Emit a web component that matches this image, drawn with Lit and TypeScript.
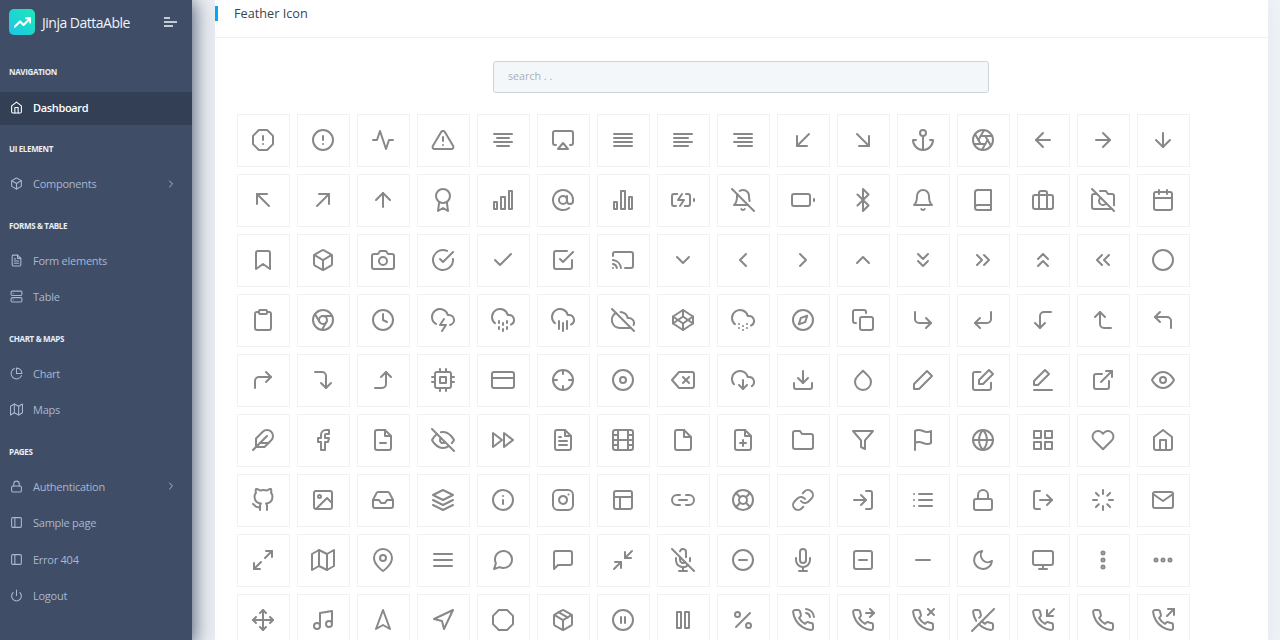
import { LitElement, html, css } from "lit";
import { customElement } from "lit/decorators.js";
import { unsafeSVG } from "lit/directives/unsafe-svg.js";

// Shape shorthand: c=circle, l=line, o=polyline, g=polygon, r=rect, anything else = path data.
const shape = (s: string) => {
  const k = s[0];
  const a = s.slice(1).trim().split(" ");
  if (k === "c") return `<circle cx="${a[0]}" cy="${a[1]}" r="${a[2]}"/>`;
  if (k === "l") return `<line x1="${a[0]}" y1="${a[1]}" x2="${a[2]}" y2="${a[3]}"/>`;
  if (k === "o") return `<polyline points="${a.join(" ")}"/>`;
  if (k === "g") return `<polygon points="${a.join(" ")}"/>`;
  if (k === "r") return `<rect x="${a[0]}" y="${a[1]}" width="${a[2]}" height="${a[3]}" rx="${a[4] || 0}"/>`;
  return `<path d="${s}"/>`;
};
const icon = (d: string) =>
  unsafeSVG(
    `<svg viewBox="0 0 24 24" fill="none" stroke="currentColor" stroke-width="2" stroke-linecap="round" stroke-linejoin="round">${d
      .split("|")
      .map(shape)
      .join("")}</svg>`
  );

const OCT = "g7.86 2 16.14 2 22 7.86 22 16.14 16.14 22 7.86 22 2 16.14 2 7.86 7.86 2";
const C = "c12 12 10";
const BOX =
  "M21 16V8a2 2 0 0 0-1-1.73l-7-4a2 2 0 0 0-2 0l-7 4A2 2 0 0 0 3 8v8a2 2 0 0 0 1 1.73l7 4a2 2 0 0 0 2 0l7-4A2 2 0 0 0 21 16z|o3.27 6.96 12 12.01 20.73 6.96|l12 22.08 12 12";
const PH =
  "M22 16.92v3a2 2 0 0 1-2.18 2 19.79 19.79 0 0 1-8.63-3.07 19.5 19.5 0 0 1-6-6 19.79 19.79 0 0 1-3.07-8.67A2 2 0 0 1 4.11 2h3a2 2 0 0 1 2 1.72 12.84 12.84 0 0 0 .7 2.81 2 2 0 0 1-.45 2.11L8.09 9.91a16 16 0 0 0 6 6l1.27-1.27a2 2 0 0 1 2.11-.45 12.84 12.84 0 0 0 2.81.7A2 2 0 0 1 22 16.92z";
const FILE2 = "M14 2H6a2 2 0 0 0-2 2v16a2 2 0 0 0 2 2h12a2 2 0 0 0 2-2V8z|o14 2 14 8 20 8";
const CLOUD = "M20 16.58A5 5 0 0 0 18 7h-1.26A8 8 0 1 0 4 15.25";

const ICONS: string[] = [
  // row 1
  `${OCT}|l12 8 12 12|l12 16 12.01 16`,
  `${C}|l12 8 12 12|l12 16 12.01 16`,
  "o22 12 18 12 15 21 9 3 6 12 2 12",
  "M10.29 3.86L1.82 18a2 2 0 0 0 1.71 3h16.94a2 2 0 0 0 1.71-3L13.71 3.86a2 2 0 0 0-3.42 0z|l12 9 12 13|l12 17 12.01 17",
  "l18 10 6 10|l21 6 3 6|l21 14 3 14|l18 18 6 18",
  "M5 17H4a2 2 0 0 1-2-2V5a2 2 0 0 1 2-2h16a2 2 0 0 1 2 2v10a2 2 0 0 1-2 2h-1|g12 15 17 21 7 21 12 15",
  "l21 10 3 10|l21 6 3 6|l21 14 3 14|l21 18 3 18",
  "l17 10 3 10|l21 6 3 6|l21 14 3 14|l17 18 3 18",
  "l21 10 7 10|l21 6 3 6|l21 14 3 14|l21 18 7 18",
  "l18 6 6 18|o16 18 6 18 6 8",
  "l6 6 18 18|o18 8 18 18 8 18",
  "c12 5 3|l12 22 12 8|M5 12H2a10 10 0 0 0 20 0h-3",
  `${C}|l14.31 8 20.05 17.94|l9.69 8 21.17 8|l7.38 12 13.12 2.06|l9.69 16 3.95 6.06|l14.31 16 2.83 16|l16.62 12 10.88 21.94`,
  "l19 12 5 12|o12 19 5 12 12 5",
  "l5 12 19 12|o12 5 19 12 12 19",
  "l12 5 12 19|o19 12 12 19 5 12",
  // row 2
  "l18 18 6 6|o6 16 6 6 16 6",
  "l6 18 18 6|o8 6 18 6 18 16",
  "l12 19 12 5|o5 12 12 5 19 12",
  "c12 8 7|o8.21 13.89 7 23 12 20 17 23 15.79 13.88",
  "r3 14 3 7|r10 9 4 12|r18 3 3 18",
  "c12 12 4|M16 8v5a3 3 0 0 0 6 0v-1a10 10 0 1 0-3.92 7.94",
  "r3 14 3 7|r10 3 4 18|r18 9 3 12",
  "M5 18H3a2 2 0 0 1-2-2V8a2 2 0 0 1 2-2h3.19M15 6h2a2 2 0 0 1 2 2v8a2 2 0 0 1-2 2h-3.19|l23 13 23 11|o11 6 7 12 13 12 9 18",
  "M13.73 21a2 2 0 0 1-3.46 0|M18.63 13A17.89 17.89 0 0 1 18 8|M6.26 6.26A5.86 5.86 0 0 0 6 8c0 7-3 9-3 9h14|M18 8a6 6 0 0 0-9.33-5|l1 1 23 23",
  "r1 6 18 12 2|l23 13 23 11",
  "o6.5 6.5 17.5 17.5 12 23 12 1 17.5 6.5 6.5 17.5",
  "M18 8A6 6 0 0 0 6 8c0 7-3 9-3 9h18s-3-2-3-9|M13.73 21a2 2 0 0 1-3.46 0",
  "M4 19.5A2.5 2.5 0 0 1 6.5 17H20|M6.5 2H20v20H6.5A2.5 2.5 0 0 1 4 19.5v-15A2.5 2.5 0 0 1 6.5 2z",
  "r2 7 20 14 2|M16 21V5a2 2 0 0 0-2-2h-4a2 2 0 0 0-2 2v16",
  "l1 1 23 23|M21 21H3a2 2 0 0 1-2-2V8a2 2 0 0 1 2-2h3m3-3h6l2 3h4a2 2 0 0 1 2 2v9.34m-7.72-2.06a4 4 0 1 1-5.56-5.56",
  "r3 4 18 18 2|l16 2 16 6|l8 2 8 6|l3 10 21 10",
  // row 3
  "M19 21l-7-5-7 5V5a2 2 0 0 1 2-2h10a2 2 0 0 1 2 2z",
  BOX,
  "M23 19a2 2 0 0 1-2 2H3a2 2 0 0 1-2-2V8a2 2 0 0 1 2-2h4l2-3h6l2 3h4a2 2 0 0 1 2 2z|c12 13 4",
  "M22 11.08V12a10 10 0 1 1-5.93-9.14|o22 4 12 14.01 9 11.01",
  "o20 6 9 17 4 12",
  "o9 11 12 14 22 4|M21 12v7a2 2 0 0 1-2 2H5a2 2 0 0 1-2-2V5a2 2 0 0 1 2-2h11",
  "M2 16.1A5 5 0 0 1 5.9 20M2 12.05A9 9 0 0 1 9.95 20M2 8V6a2 2 0 0 1 2-2h16a2 2 0 0 1 2 2v12a2 2 0 0 1-2 2h-6|l2 20 2.01 20",
  "o6 9 12 15 18 9",
  "o15 18 9 12 15 6",
  "o9 18 15 12 9 6",
  "o18 15 12 9 6 15",
  "o7 13 12 18 17 13|o7 6 12 11 17 6",
  "o13 17 18 12 13 7|o6 17 11 12 6 7",
  "o17 11 12 6 7 11|o17 18 12 13 7 18",
  "o11 17 6 12 11 7|o18 17 13 12 18 7",
  C,
  // row 4
  "M16 4h2a2 2 0 0 1 2 2v14a2 2 0 0 1-2 2H6a2 2 0 0 1-2-2V6a2 2 0 0 1 2-2h2|r8 2 8 4 1",
  `${C}|c12 12 4|l21.17 8 12 8|l3.95 6.06 8.54 14|l10.88 21.94 15.46 14`,
  `${C}|o12 6 12 12 16 14`,
  "M19 16.9A5 5 0 0 0 18 7h-1.26a8 8 0 1 0-11.62 9|o13 11 9 17 15 17 11 23",
  `l8 19 8 21|l8 13 8 15|l16 19 16 21|l16 13 16 15|l12 21 12 23|l12 15 12 17|${CLOUD}`,
  `l16 13 16 21|l8 13 8 21|l12 15 12 23|${CLOUD}`,
  "M22.61 16.95A5 5 0 0 0 18 10h-1.26a8 8 0 0 0-7.05-6M5 5a8 8 0 0 0 4 15h9a5 5 0 0 0 1.7-.3|l1 1 23 23",
  "g12 2 22 8.5 22 15.5 12 22 2 15.5 2 8.5 12 2|l12 22 12 15.5|o22 8.5 12 15.5 2 8.5|o2 15.5 12 8.5 22 15.5|l12 2 12 8.5",
  "M20 17.58A5 5 0 0 0 18 8h-1.26A8 8 0 1 0 4 16.25|l8 16 8.01 16|l8 20 8.01 20|l12 18 12.01 18|l12 22 12.01 22|l16 16 16.01 16|l16 20 16.01 20",
  `${C}|g16.24 7.76 14.12 14.12 7.76 16.24 9.88 9.88 16.24 7.76`,
  "r9 9 13 13 2|M5 15H4a2 2 0 0 1-2-2V4a2 2 0 0 1 2-2h9a2 2 0 0 1 2 2v1",
  "o15 10 20 15 15 20|M4 4v7a4 4 0 0 0 4 4h12",
  "o9 10 4 15 9 20|M20 4v7a4 4 0 0 1-4 4H4",
  "o14 15 9 20 4 15|M20 4h-7a4 4 0 0 0-4 4v12",
  "o14 9 9 4 4 9|M20 20h-7a4 4 0 0 1-4-4V4",
  "o9 14 4 9 9 4|M20 20v-7a4 4 0 0 0-4-4H4",
  // row 5
  "o15 14 20 9 15 4|M4 20v-7a4 4 0 0 1 4-4h12",
  "o10 15 15 20 20 15|M4 4h7a4 4 0 0 1 4 4v12",
  "o10 9 15 4 20 9|M4 20h7a4 4 0 0 0 4-4V4",
  "r4 4 16 16 2|r9 9 6 6|l9 1 9 4|l15 1 15 4|l9 20 9 23|l15 20 15 23|l20 9 23 9|l20 14 23 14|l1 9 4 9|l1 14 4 14",
  "r1 4 22 16 2|l1 10 23 10",
  `${C}|l22 12 18 12|l6 12 2 12|l12 6 12 2|l12 22 12 18`,
  `${C}|c12 12 3`,
  "M21 4H8l-7 8 7 8h13a2 2 0 0 0 2-2V6a2 2 0 0 0-2-2z|l18 9 12 15|l12 9 18 15",
  "o8 17 12 21 16 17|l12 12 12 21|M20.88 18.09A5 5 0 0 0 18 9h-1.26A8 8 0 1 0 3 16.29",
  "M21 15v4a2 2 0 0 1-2 2H5a2 2 0 0 1-2-2v-4|o7 10 12 15 17 10|l12 15 12 3",
  "M12 2.69l5.66 5.66a8 8 0 1 1-11.31 0z",
  "g16 3 21 8 8 21 3 21 3 16 16 3",
  "M20 14.66V20a2 2 0 0 1-2 2H4a2 2 0 0 1-2-2V6a2 2 0 0 1 2-2h5.34|g18 2 22 6 12 16 8 16 8 12 18 2",
  "g14 2 18 6 7 17 3 17 3 13 14 2|l3 22 21 22",
  "M18 13v6a2 2 0 0 1-2 2H5a2 2 0 0 1-2-2V8a2 2 0 0 1 2-2h6|o15 3 21 3 21 9|l10 14 21 3",
  "M1 12s4-8 11-8 11 8 11 8-4 8-11 8-11-8-11-8z|c12 12 3",
  // row 6
  "M20.24 12.24a6 6 0 0 0-8.49-8.49L5 10.5V19h8.5z|l16 8 2 22|l17.5 15 9 15",
  "M18 2h-3a5 5 0 0 0-5 5v3H7v4h3v8h4v-8h3l1-4h-4V7a1 1 0 0 1 1-1h3z",
  `${FILE2}|l9 15 15 15`,
  "M17.94 17.94A10.07 10.07 0 0 1 12 20c-7 0-11-8-11-8a18.45 18.45 0 0 1 5.06-5.94M9.9 4.24A9.12 9.12 0 0 1 12 4c7 0 11 8 11 8a18.5 18.5 0 0 1-2.16 3.19m-6.72-1.07a3 3 0 1 1-4.24-4.24|l1 1 23 23",
  "g13 19 22 12 13 5 13 19|g2 19 11 12 2 5 2 19",
  `${FILE2}|l16 13 8 13|l16 17 8 17|o10 9 9 9 8 9`,
  "r2 2 20 20 2.18|l7 2 7 22|l17 2 17 22|l2 12 22 12|l2 7 7 7|l2 17 7 17|l17 17 22 17|l17 7 22 7",
  "M13 2H6a2 2 0 0 0-2 2v16a2 2 0 0 0 2 2h12a2 2 0 0 0 2-2V9z|o13 2 13 9 20 9",
  `${FILE2}|l12 18 12 12|l9 15 15 15`,
  "M22 19a2 2 0 0 1-2 2H4a2 2 0 0 1-2-2V5a2 2 0 0 1 2-2h5l2 3h9a2 2 0 0 1 2 2z",
  "g22 3 2 3 10 12.46 10 19 14 21 14 12.46 22 3",
  "M4 15s1-1 4-1 5 2 8 2 4-1 4-1V3s-1 1-4 1-5-2-8-2-4 1-4 1z|l4 22 4 15",
  `${C}|l2 12 22 12|M12 2a15.3 15.3 0 0 1 4 10 15.3 15.3 0 0 1-4 10 15.3 15.3 0 0 1-4-10 15.3 15.3 0 0 1 4-10z`,
  "r3 3 7 7|r14 3 7 7|r14 14 7 7|r3 14 7 7",
  "M20.84 4.61a5.5 5.5 0 0 0-7.78 0L12 5.67l-1.06-1.06a5.5 5.5 0 0 0-7.78 7.78l1.06 1.06L12 21.23l7.78-7.78 1.06-1.06a5.5 5.5 0 0 0 0-7.78z",
  "M3 9l9-7 9 7v11a2 2 0 0 1-2 2H5a2 2 0 0 1-2-2z|o9 22 9 12 15 12 15 22",
  // row 7
  "M9 19c-5 1.5-5-2.5-7-3m14 6v-3.87a3.37 3.37 0 0 0-.94-2.61c3.14-.35 6.44-1.54 6.44-7A5.44 5.44 0 0 0 20 4.77 5.07 5.07 0 0 0 19.91 1S18.73.65 16 2.48a13.38 13.38 0 0 0-7 0C6.27.65 5.09 1 5.09 1A5.07 5.07 0 0 0 5 4.77a5.44 5.44 0 0 0-1.5 3.78c0 5.42 3.3 6.61 6.44 7A3.37 3.37 0 0 0 9 18.13V22",
  "r3 3 18 18 2|c8.5 8.5 1.5|o21 15 16 10 5 21",
  "o22 12 16 12 14 15 10 15 8 12 2 12|M5.45 5.11L2 12v6a2 2 0 0 0 2 2h16a2 2 0 0 0 2-2v-6l-3.45-6.89A2 2 0 0 0 16.76 4H7.24a2 2 0 0 0-1.79 1.11z",
  "g12 2 2 7 12 12 22 7 12 2|o2 17 12 22 22 17|o2 12 12 17 22 12",
  `${C}|l12 16 12 12|l12 8 12.01 8`,
  "r2 2 20 20 5|M16 11.37A4 4 0 1 1 12.63 8 4 4 0 0 1 16 11.37z|l17.5 6.5 17.51 6.5",
  "r3 3 18 18 2|l3 9 21 9|l9 21 9 9",
  "M15 7h3a5 5 0 0 1 5 5 5 5 0 0 1-5 5h-3m-6 0H6a5 5 0 0 1-5-5 5 5 0 0 1 5-5h3|l8 12 16 12",
  `${C}|c12 12 4|l4.93 4.93 9.17 9.17|l14.83 14.83 19.07 19.07|l14.83 9.17 19.07 4.93|l4.93 19.07 9.17 14.83`,
  "M10 13a5 5 0 0 0 7.54.54l3-3a5 5 0 0 0-7.07-7.07l-1.72 1.71|M14 11a5 5 0 0 0-7.54-.54l-3 3a5 5 0 0 0 7.07 7.07l1.71-1.71",
  "M15 3h4a2 2 0 0 1 2 2v14a2 2 0 0 1-2 2h-4|o10 17 15 12 10 7|l15 12 3 12",
  "l8 6 21 6|l8 12 21 12|l8 18 21 18|l3 6 3.01 6|l3 12 3.01 12|l3 18 3.01 18",
  "r3 11 18 11 2|M7 11V7a5 5 0 0 1 10 0v4",
  "M9 21H5a2 2 0 0 1-2-2V5a2 2 0 0 1 2-2h4|o16 17 21 12 16 7|l21 12 9 12",
  "l12 2 12 6|l12 18 12 22|l4.93 4.93 7.76 7.76|l16.24 16.24 19.07 19.07|l2 12 6 12|l18 12 22 12|l4.93 19.07 7.76 16.24|l16.24 7.76 19.07 4.93",
  "M4 4h16c1.1 0 2 .9 2 2v12c0 1.1-.9 2-2 2H4c-1.1 0-2-.9-2-2V6c0-1.1.9-2 2-2z|o22 6 12 13 2 6",
  // row 8
  "o15 3 21 3 21 9|o9 21 3 21 3 15|l21 3 14 10|l3 21 10 14",
  "g1 6 1 22 8 18 16 22 23 18 23 2 16 6 8 2 1 6|l8 2 8 18|l16 6 16 22",
  "M21 10c0 7-9 13-9 13s-9-6-9-13a9 9 0 0 1 18 0z|c12 10 3",
  "l3 12 21 12|l3 6 21 6|l3 18 21 18",
  "M21 11.5a8.38 8.38 0 0 1-.9 3.8 8.5 8.5 0 0 1-7.6 4.7 8.38 8.38 0 0 1-3.8-.9L3 21l1.9-5.7a8.38 8.38 0 0 1-.9-3.8 8.5 8.5 0 0 1 4.7-7.6 8.38 8.38 0 0 1 3.8-.9h.5a8.48 8.48 0 0 1 8 8v.5z",
  "M21 15a2 2 0 0 1-2 2H7l-4 4V5a2 2 0 0 1 2-2h14a2 2 0 0 1 2 2z",
  "o4 14 10 14 10 20|o20 10 14 10 14 4|l14 10 21 3|l3 21 10 14",
  "l1 1 23 23|M9 9v3a3 3 0 0 0 5.12 2.12M15 9.34V4a3 3 0 0 0-5.94-.6|M17 16.95A7 7 0 0 1 5 12v-2m14 0v2a7 7 0 0 1-.11 1.23|l12 19 12 23|l8 23 16 23",
  `${C}|l8 12 16 12`,
  "M12 1a3 3 0 0 0-3 3v8a3 3 0 0 0 6 0V4a3 3 0 0 0-3-3z|M19 10v2a7 7 0 0 1-14 0v-2|l12 19 12 23|l8 23 16 23",
  "r3 3 18 18 2|l8 12 16 12",
  "l5 12 19 12",
  "M21 12.79A9 9 0 1 1 11.21 3 7 7 0 0 0 21 12.79z",
  "r2 3 20 14 2|l8 21 16 21|l12 17 12 21",
  "c12 12 1.5|c12 5 1.5|c12 19 1.5",
  "c12 12 1.5|c19 12 1.5|c5 12 1.5",
  // row 9
  "o5 9 2 12 5 15|o9 5 12 2 15 5|o15 19 12 22 9 19|o19 9 22 12 19 15|l2 12 22 12|l12 2 12 22",
  "M9 18V5l12-2v13|c6 18 3|c18 16 3",
  "g12 2 19 21 12 17 5 21 12 2",
  "g3 11 22 2 13 21 11 13 3 11",
  OCT,
  `l16.5 9.4 7.5 4.21|${BOX}`,
  `${C}|l10 15 10 9|l14 15 14 9`,
  "r6 4 4 16|r14 4 4 16",
  "l19 5 5 19|c6.5 6.5 2.5|c17.5 17.5 2.5",
  `M15.05 5A5 5 0 0 1 19 8.95M15.05 1A9 9 0 0 1 23 8.94|${PH}`,
  `o19 1 23 5 19 9|l15 5 23 5|${PH}`,
  `l23 1 17 7|l17 1 23 7|${PH}`,
  "M10.68 13.31a16 16 0 0 0 3.41 2.6l1.27-1.27a2 2 0 0 1 2.11-.45 12.84 12.84 0 0 0 2.81.7 2 2 0 0 1 1.72 2v3a2 2 0 0 1-2.18 2 19.79 19.79 0 0 1-8.63-3.07 19.42 19.42 0 0 1-3.33-2.67m-2.67-3.34a19.79 19.79 0 0 1-3.07-8.63A2 2 0 0 1 4.11 2h3a2 2 0 0 1 2 1.72 12.84 12.84 0 0 0 .7 2.81 2 2 0 0 1-.45 2.11L8.09 9.91|l23 1 1 23",
  `o16 2 16 8 22 8|l23 1 16 8|${PH}`,
  PH,
  `o23 7 23 1 17 1|l16 8 23 1|${PH}`,
];

const HOME = "M3 9l9-7 9 7v11a2 2 0 0 1-2 2H5a2 2 0 0 1-2-2z|o9 22 9 12 15 12 15 22";
const NAV: { label: string; items: { t: string; i: string; more?: boolean; on?: boolean }[] }[] = [
  { label: "NAVIGATION", items: [{ t: "Dashboard", i: HOME, on: true }] },
  { label: "UI ELEMENT", items: [{ t: "Components", i: BOX, more: true }] },
  {
    label: "FORMS & TABLE",
    items: [
      { t: "Form elements", i: `${FILE2}|l16 13 8 13|l16 17 8 17|o10 9 9 9 8 9` },
      { t: "Table", i: "r2 2 20 8 2|r2 14 20 8 2|l6 6 6.01 6|l6 18 6.01 18" },
    ],
  },
  {
    label: "CHART & MAPS",
    items: [
      { t: "Chart", i: "M21.21 15.89A10 10 0 1 1 8 2.83|M22 12A10 10 0 0 0 12 2v10z" },
      { t: "Maps", i: "g1 6 1 22 8 18 16 22 23 18 23 2 16 6 8 2 1 6|l8 2 8 18|l16 6 16 22" },
    ],
  },
  {
    label: "PAGES",
    items: [
      { t: "Authentication", i: "r3 11 18 11 2|M7 11V7a5 5 0 0 1 10 0v4", more: true },
      { t: "Sample page", i: "r3 3 18 18 2|l9 3 9 21" },
      { t: "Error 404", i: "r3 3 18 18 2|l9 3 9 21" },
      { t: "Logout", i: "M18.36 6.64a9 9 0 1 1-12.73 0|l12 2 12 12" },
    ],
  },
];

@customElement("app-root")
export class AppRoot extends LitElement {
  static styles = css`
    :host {
      display: grid;
      grid-template-columns: 192px 1fr;
      height: 640px;
      overflow: hidden;
      background: #f0f3f7;
      font-family: "Open Sans", "Liberation Sans", sans-serif;
    }
    svg {
      display: block;
      width: 100%;
      height: 100%;
    }
    .side {
      background: #3f4d67;
      color: #a9b7d0;
      box-shadow: 1px 0 20px 0 #3f4d67;
      position: relative;
      z-index: 1;
      padding-top: 9px;
    }
    .brand {
      display: flex;
      align-items: center;
      height: 26px;
      padding: 0 15px 0 9px;
    }
    .logo {
      width: 26px;
      height: 26px;
      border-radius: 5px;
      background: linear-gradient(-135deg, #1de9b6 0%, #1dc4e9 100%);
      color: #fff;
      padding: 4.5px;
      box-sizing: border-box;
    }
    .logo svg {
      stroke-width: 3;
    }
    .name {
      margin-left: 7px;
      flex: 1;
      color: #f0f3f8;
      font-size: 14px;
      letter-spacing: -0.5px;
    }
    .toggle {
      display: flex;
      flex-direction: column;
      gap: 2px;
      width: 13px;
    }
    .toggle i {
      display: block;
      height: 2px;
      background: #c3cbd8;
    }
    .toggle i:nth-child(1) {
      width: 6px;
    }
    .toggle i:nth-child(3) {
      width: 9px;
    }
    .group {
      display: flex;
      flex-direction: column;
    }
    .label {
      font-size: 8px;
      font-weight: 700;
      letter-spacing: -0.35px;
      color: #e8edf7;
      padding-left: 9px;
      height: 12px;
      line-height: 12px;
    }
    .row {
      display: flex;
      align-items: center;
      height: 33px;
      padding: 0 15px 3px 10px;
      box-sizing: border-box;
      margin-bottom: 3.5px;
      font-size: 11px;
      letter-spacing: -0.25px;
    }
    .row.on {
      background: #333f54;
      color: #fff;
      font-weight: 600;
      letter-spacing: -0.35px;
    }
    .ri {
      width: 13px;
      height: 13px;
      margin-right: 10px;
      flex: none;
    }
    .rt {
      flex: 1;
    }
    .chev {
      width: 12px;
      height: 12px;
    }
    .g0 {
      margin-top: 31px;
    }
    .g0 .label {
      margin-bottom: 14px;
    }
    .group:not(.g0) {
      margin-top: 14.5px;
    }
    .group:not(.g0) .label {
      margin-bottom: 13.5px;
    }
    .main {
      padding: 0 12px 0 23px;
      min-width: 0;
    }
    .card {
      background: #fff;
      box-shadow: 0 1px 20px 0 rgba(69, 90, 100, 0.08);
      height: 100%;
    }
    .head {
      position: relative;
      border-bottom: 1px solid #f1f1f1;
      padding: 5px 0 0 19px;
      box-sizing: content-box;
      font-size: 12.7px;
      line-height: 17px;
      color: #37474f;
      height: 32px;
    }
    .head::before {
      content: "";
      position: absolute;
      left: 0;
      top: 6px;
      width: 3px;
      height: 15px;
      background: #04a9f5;
    }
    .body {
      padding: 23px 23px 0 22px;
    }
    .search {
      display: block;
      width: 496px;
      height: 32px;
      margin: 0 auto 21px;
      box-sizing: border-box;
      background: #f4f7fa;
      border: 1px solid #ced4da;
      border-radius: 3px;
      padding: 0 14px 2px;
      font-family: inherit;
      font-size: 10.7px;
      outline: none;
    }
    .search::placeholder {
      color: #aab0b6;
      opacity: 1;
    }
    .grid {
      display: grid;
      grid-template-columns: repeat(16, 53px);
      grid-auto-rows: 53px;
      gap: 7px;
    }
    .cell {
      border: 1px solid #f1f1f1;
      padding: 0 1px 1px 0;
      display: flex;
      align-items: center;
      justify-content: center;
      color: #888;
    }
    .cell span {
      width: 24px;
      height: 24px;
    }
  `;

  render() {
    return html`
      <aside class="side">
        <div class="brand">
          <div class="logo">${icon("o23 6 13.5 15.5 8.5 10.5 1 18|o17 6 23 6 23 12")}</div>
          <div class="name">Jinja DattaAble</div>
          <div class="toggle"><i></i><i></i><i></i></div>
        </div>
        ${NAV.map(
          (g, n) => html`
            <div class="group ${n === 0 ? "g0" : ""}">
              <div class="label">${g.label}</div>
              ${g.items.map(
                (it) => html`
                  <div class="row ${it.on ? "on" : ""}">
                    <span class="ri">${icon(it.i)}</span>
                    <span class="rt">${it.t}</span>
                    ${it.more ? html`<span class="chev">${icon("o9 18 15 12 9 6")}</span>` : ""}
                  </div>
                `
              )}
            </div>
          `
        )}
      </aside>
      <main class="main">
        <section class="card">
          <div class="head">Feather Icon</div>
          <div class="body">
            <input class="search" placeholder="search . ." />
            <div class="grid">
              ${ICONS.map((d) => html`<div class="cell"><span>${icon(d)}</span></div>`)}
            </div>
          </div>
        </section>
      </main>
    `;
  }
}
